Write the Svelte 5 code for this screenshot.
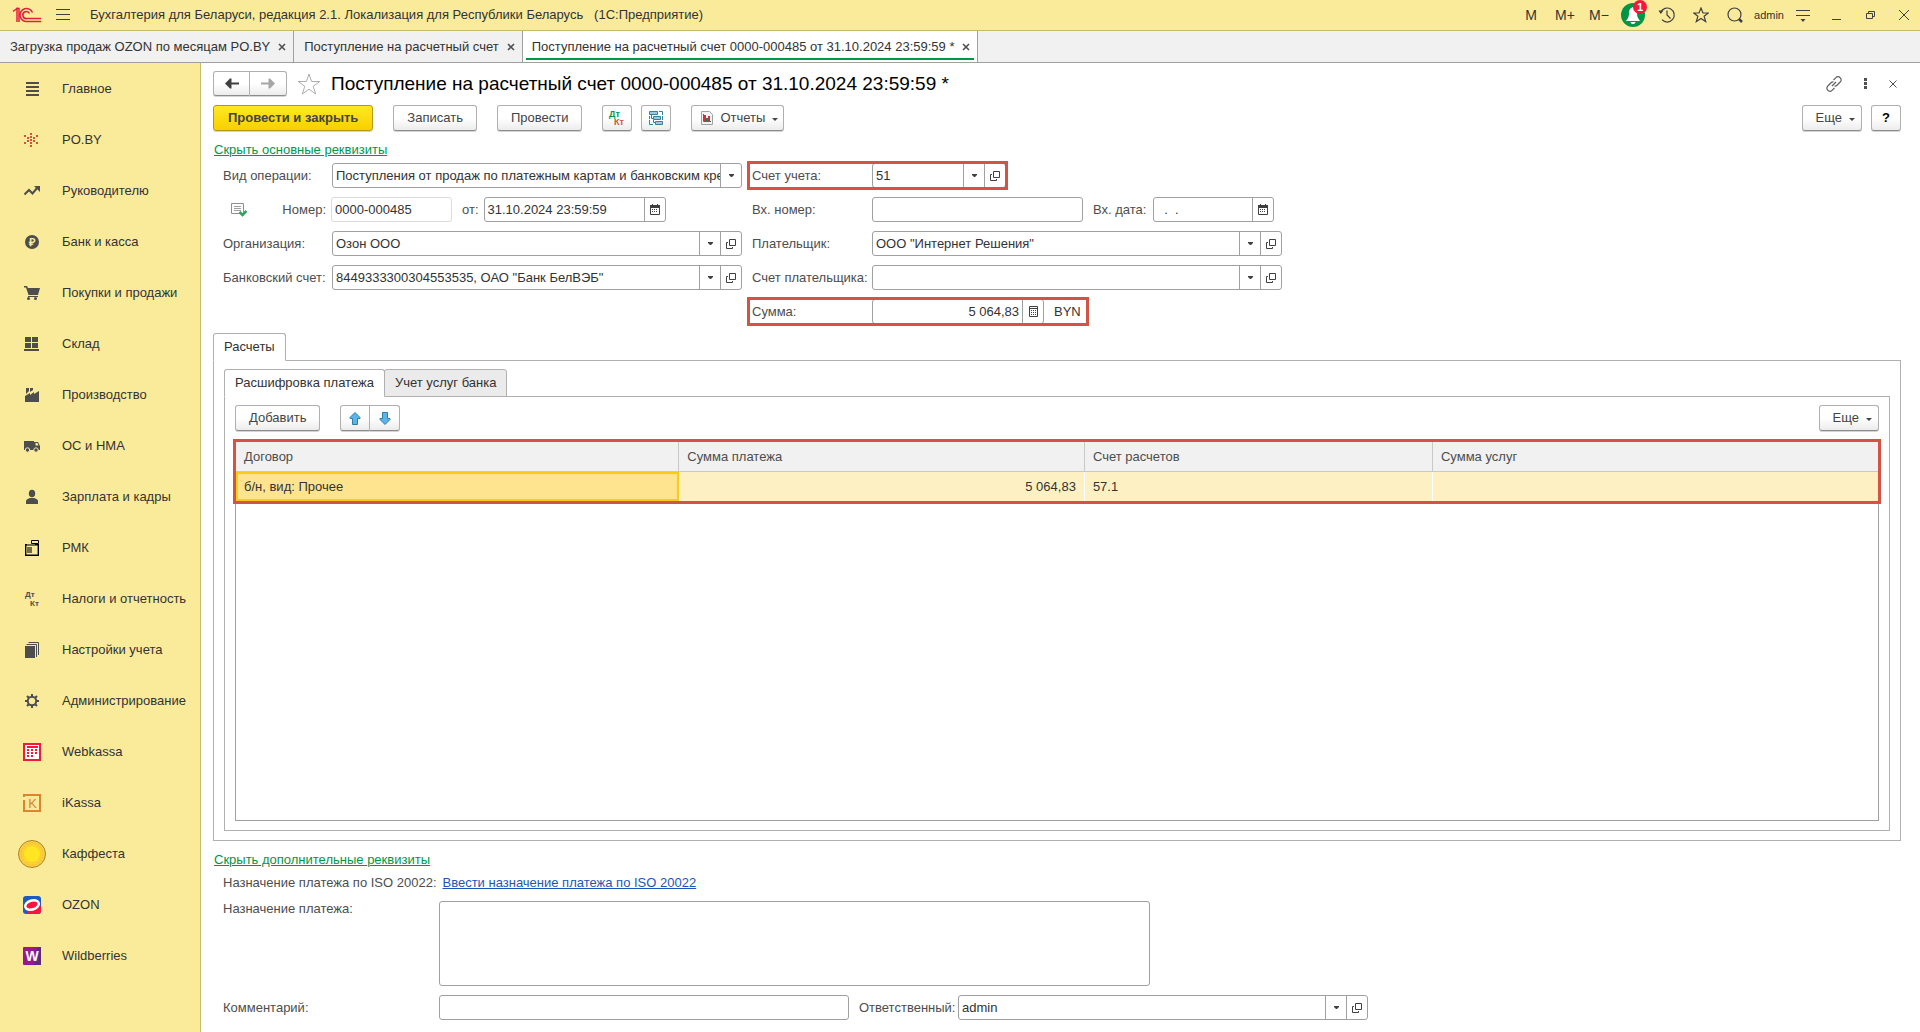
<script lang="ts">
  type NavItem = { icon: string; title: string };

  const nav: NavItem[] = [
    { icon: "main", title: "Главное" },
    { icon: "poby", title: "PO.BY" },
    { icon: "chart", title: "Руководителю" },
    { icon: "bank", title: "Банк и касса" },
    { icon: "cart", title: "Покупки и продажи" },
    { icon: "store", title: "Склад" },
    { icon: "factory", title: "Производство" },
    { icon: "truck", title: "ОС и НМА" },
    { icon: "person", title: "Зарплата и кадры" },
    { icon: "rmk", title: "РМК" },
    { icon: "dtkt", title: "Налоги и отчетность" },
    { icon: "books", title: "Настройки учета" },
    { icon: "gear", title: "Администрирование" },
    { icon: "webkassa", title: "Webkassa" },
    { icon: "ikassa", title: "iKassa" },
    { icon: "kaffesta", title: "Каффеста" },
    { icon: "ozon", title: "OZON" },
    { icon: "wb", title: "Wildberries" },
  ];

  const tabs = [
    "Загрузка продаж OZON по месяцам PO.BY",
    "Поступление на расчетный счет",
    "Поступление на расчетный счет 0000-000485 от 31.10.2024 23:59:59 *",
  ];
  let activeTab = $state(2);
  let innerTab = $state(0);

  // pixel pattern of the PO.BY logo, 2px squares
  const dots = [
    [6, 0], [0, 2], [12, 2], [6, 3], [3, 4], [9, 4], [6, 6],
    [3, 7], [9, 7], [6, 9], [0, 9], [12, 9], [6, 12],
  ];

  let number = $state("0000-000485");
  let date = $state("31.10.2024 23:59:59");
  let org = $state("Озон ООО");
  let bankAccount = $state('8449333300304553535, ОАО "Банк БелВЭБ"');
  let account = $state("51");
  let inNumber = $state("");
  let inDate = $state("  .  .");
  let payer = $state('ООО "Интернет Решения"');
  let payerAccount = $state("");
  let sum = $state("5 064,83");
  let purpose = $state("");
  let comment = $state("");
  let responsible = $state("admin");

  const rows = [{ contract: "б/н, вид: Прочее", sum: "5 064,83", account: "57.1", services: "" }];
</script>

{#snippet drop(label: string)}
  <button class="part" aria-label={label}>
    <svg width="7" height="4" viewBox="0 0 7 4"><path d="M1 0h5v1L4 3H3L1 1z" fill="#404040" /></svg>
  </button>
{/snippet}

{#snippet open()}
  <button class="part" aria-label="Открыть">
    <svg width="10" height="10" viewBox="0 0 10 10" fill="none" stroke="#404040">
      <path d="M3.5 0.5h6v6h-6zM2 3.5H0.5v6h6V8" />
    </svg>
  </button>
{/snippet}

{#snippet calendar()}
  <button class="part" aria-label="Выбрать дату">
    <svg width="10" height="11" viewBox="0 0 10 11">
      <path d="M0 1h10v3H0z" fill="#404040" />
      <path d="M0.5 3.5h9v7h-9zM2.5 0v2M7.5 0v2" fill="none" stroke="#404040" />
      <path d="M2 5h1v1H2zM4 5h1v1H4zM6 5h1v1H6zM2 7h1v1H2zM4 7h1v1H4zM6 7h1v1H6z" fill="#404040" />
    </svg>
  </button>
{/snippet}

<div class="app">
  <header class="titlebar">
    <svg class="logo" width="30" height="18" viewBox="0 0 30 18" fill="none" stroke="#e3203a">
      <path d="M1 5.500l4-3V16M4 2.500h3V16" stroke-width="1.500" />
      <path d="M20.500 6.500A6.500 6.500 0 1 0 15 15.500H29" stroke-width="1.600" />
      <path d="M17.500 7.500A3.500 3.500 0 1 0 15 12.500H29" stroke-width="1.600" />
    </svg>
    <button class="plain burger" aria-label="Меню">
      <svg width="14" height="12" viewBox="0 0 14 12" stroke="#404040"><path d="M0 0.5h14M0 5.5h14M0 10.5h14" /></svg>
    </button>
    <span class="app-name">Бухгалтерия для Беларуси, редакция 2.1. Локализация для Республики Беларусь&nbsp;&nbsp; (1С:Предприятие)</span>
    <div class="title-tools">
      <button class="plain mem">M</button>
      <button class="plain mem">M+</button>
      <button class="plain mem">M−</button>
      <button class="plain" aria-label="Уведомления">
        <span class="bell">
          <svg width="24" height="24" viewBox="0 0 24 24">
            <circle cx="12" cy="12" r="12" fill="#009646" />
            <path d="M12 4c-3 1-4 3-4 6 0 4-1 5-3 8h14c-2-3-3-4-3-8 0-3-1-5-4-6z" fill="#fff" />
            <path d="M9.500 19h5a2.500 2 0 0 1-5 0z" fill="#fff" />
          </svg>
          <span class="badge">1</span>
        </span>
      </button>
      <button class="plain" aria-label="История">
        <svg width="18" height="18" viewBox="0 0 18 18" fill="none" stroke="#404040" stroke-width="1.200">
          <path d="M2.700 6.500A7 7 0 1 1 4 13.700M9 4.500V9l3.500 3.500" />
          <path d="M0.500 4.500h5L2.700 8z" fill="#404040" stroke="none" />
        </svg>
      </button>
      <button class="plain" aria-label="Избранное">
        <svg width="16" height="16" viewBox="0 0 16 16" fill="none" stroke="#404040" stroke-width="1.200">
          <path d="M8 1l2 5h5.300l-4.200 3.300 1.600 5.200L8 11.400l-4.700 3.100 1.600-5.200L0.700 6H6z" />
        </svg>
      </button>
      <button class="plain" aria-label="Поиск">
        <svg width="16" height="16" viewBox="0 0 16 16" fill="none" stroke="#404040" stroke-width="1.200">
          <circle cx="7.500" cy="7.500" r="6.500" /><path d="M12 12l3 3" stroke-width="2.500" />
        </svg>
      </button>
      <span class="user">admin</span>
      <button class="plain" aria-label="Настройка">
        <svg width="14" height="13" viewBox="0 0 14 13">
          <path d="M0 1.500h14M0 6.500h14" stroke="#404040" /><path d="M4.500 10h5L7 13z" fill="#404040" />
        </svg>
      </button>
      <button class="plain" aria-label="Свернуть">
        <svg width="10" height="10" viewBox="0 0 10 10" stroke="#404040"><path d="M0 9.500h9" /></svg>
      </button>
      <button class="plain" aria-label="Восстановить">
        <svg width="10" height="10" viewBox="0 0 10 10" fill="none" stroke="#404040">
          <path d="M0.500 3.500h6v5h-6zM2.500 3.500v-2h6v5h-2" />
        </svg>
      </button>
      <button class="plain" aria-label="Закрыть">
        <svg width="10" height="10" viewBox="0 0 10 10" stroke="#404040"><path d="M0 0l10 10M10 0L0 10" /></svg>
      </button>
    </div>
  </header>

  <nav class="tabs">
    {#each tabs as tab, i}
      <div class="tab" class:active={activeTab === i}>
        <button class="plain" onclick={() => (activeTab = i)}>{tab}</button>
        <button class="plain close" aria-label="Закрыть вкладку">
          <svg width="8" height="8" viewBox="0 0 8 8" stroke="#505050" stroke-width="1.600"><path d="M1 1l6 6M7 1L1 7" /></svg>
        </button>
      </div>
    {/each}
  </nav>

  <div class="body">
    <aside class="sidebar">
      {#each nav as item}
        <a href="#{item.icon}">
          <span class="icon">
            {#if item.icon === "kaffesta"}
              <svg width="28" height="28" viewBox="0 0 28 28">
                <circle cx="14" cy="14" r="13.500" fill="#fcd535" stroke="#a8832a" />
                <circle cx="14" cy="14" r="11" fill="none" stroke="#f5c04a" stroke-width="2" stroke-dasharray="2 1" />
                <circle cx="14" cy="14" r="8.500" fill="#ffe524" stroke="#f8cf20" />
              </svg>
            {:else}
              <svg width="18" height="18" viewBox="0 0 18 18" fill="#4d4d4d">
                {#if item.icon === "main"}
                  <path d="M3 2h13v2H3zM3 6h13v2H3zM3 10h13v2H3zM3 14h13v2H3z" />
                {:else if item.icon === "poby"}
                  {#each dots as [x, y]}
                    <rect x={x + 1} y={y + 2} width="2" height="2" fill="#d9503c" />
                  {/each}
                {:else if item.icon === "chart"}
                  <path d="M1.500 12.500l4.500-4.500 3.500 3.500 5-6" fill="none" stroke="#4d4d4d" stroke-width="2" />
                  <path d="M11 4h6v6z" />
                {:else if item.icon === "bank"}
                  <circle cx="9" cy="9" r="7" />
                  <text x="9" y="13" font-size="11" font-weight="700" fill="#faeb9b" text-anchor="middle">₽</text>
                {:else if item.icon === "cart"}
                  <path d="M1 2h3l1 2h12l-2 7H5.500L3 3.500H1zM5 12h10v1H5z" /><circle cx="5.500" cy="14.500" r="1.500" /><circle cx="12.500" cy="14.500" r="1.500" />
                {:else if item.icon === "store"}
                  <path d="M2 2h6v5H2zM9 2h6v5H9zM2 8h6v5H2zM9 8h6v5H9zM1 14h15v2H1z" />
                {:else if item.icon === "factory"}
                  <path d="M2 16v-6l5-3v2l4-3v2l5-3v11zM3 2h3v3L3 8zM7 2h3v2L7 6z" />
                {:else if item.icon === "truck"}
                  <path d="M1 4h10v1h4l2 4v4H1z" /><circle cx="4.500" cy="13" r="2.200" stroke="#faeb9b" /><circle cx="13" cy="13" r="2.200" stroke="#faeb9b" />
                  <path d="M12.500 6h2l1 2.500h-3z" fill="#faeb9b" />
                {:else if item.icon === "person"}
                  <ellipse cx="9" cy="5.500" rx="3.200" ry="3.800" /><path d="M3 16v-3c0-1.500 2-2.500 4-3h4c2 .5 4 1.500 4 3v3z" />
                {:else if item.icon === "rmk"}
                  <path d="M2.700 5.700h12.600v10.600H2.700z" fill="#faeb9b" stroke="#000" stroke-width="1.400" />
                  <path d="M8.500 1.500h7v3h-7zM11.500 4v3" fill="#faeb9b" stroke="#000" />
                  <path d="M4 5h8v2H4zM4 8h5v6H4z" fill="#6e7048" />
                {:else if item.icon === "dtkt"}
                  <text x="2" y="7" font-size="8" font-weight="700">Дт</text>
                  <text x="7" y="16" font-size="8" font-weight="700">Кт</text>
                {:else if item.icon === "books"}
                  <path d="M2 5h10v12H2z" /><path d="M3.500 3.500h10V16M5.500 1.500h10V14" fill="none" stroke="#4d4d4d" />
                {:else if item.icon === "gear"}
                  <circle cx="9" cy="9" r="4.200" fill="none" stroke="#4d4d4d" stroke-width="2" />
                  <path d="M9 2v3M9 13v3M2 9h3M13 9h3M4 4l2 2M12 12l2 2M14 4l-2 2M6 12l-2 2" stroke="#4d4d4d" stroke-width="2" />
                {:else if item.icon === "webkassa"}
                  <rect x="1" y="1" width="16" height="16" fill="#fff" stroke="#f5183c" stroke-width="2" />
                  <path d="M4 3h11v2H4zM4 6h2v2H4zM8 6h2v2H8zM12 6h2v2h-2zM4 9h2v2H4zM8 9h2v2H8zM12 9h2v2h-2zM4 12h2v2H4zM8 12h2v2H8z" fill="#f5183c" />
                {:else if item.icon === "ikassa"}
                  <path d="M1 3V1h16v16H1V6" fill="none" stroke="#dc8430" stroke-width="2" />
                  <text x="9.500" y="14" font-size="13" fill="#dc8430" text-anchor="middle">K</text>
                {:else if item.icon === "ozon"}
                  <rect width="18" height="18" rx="3" fill="#1d5bc4" /><path d="M4 18l1-4 13-4v5a3 3 0 0 1-3 3z" fill="#f8143c" />
                  <ellipse cx="9" cy="9" rx="7" ry="4.500" transform="rotate(-18 9 9)" fill="#f8143c" stroke="#fff" stroke-width="2.500" />
                {:else if item.icon === "wb"}
                  <rect width="18" height="18" rx="1" fill="#9a1690" /><path d="M14 0h4v18h-7z" fill="#5c2a80" />
                  <text x="9" y="14" font-size="14" font-weight="700" fill="#fff" text-anchor="middle">W</text>
                {/if}
              </svg>
            {/if}
          </span>
          {item.title}
        </a>
      {/each}
    </aside>

    <main>
      <div class="heading">
        <div class="group">
          <button class="btn nav-btn" aria-label="Назад">
            <svg width="14" height="11" viewBox="0 0 14 11"><path d="M0 5.500L5 0.500h1.500V4.500H14v2H6.500v4H5z" fill="#404040" /></svg>
          </button>
          <button class="btn nav-btn" aria-label="Вперед">
            <svg width="14" height="11" viewBox="0 0 14 11"><path d="M14 5.500L9 0.500H7.500V4.500H0v2h7.500v4H9z" fill="#a6a6a6" /></svg>
          </button>
        </div>
        <button class="plain" aria-label="В избранное">
          <svg width="24" height="22" viewBox="0 0 24 22" fill="none" stroke="#adadad">
            <path d="M12 1l2.600 7.500h8.200l-6.600 4.800 2.500 7.700-6.700-4.800L5.300 21l2.500-7.700L1.200 8.500h8.200z" />
          </svg>
        </button>
        <h1>Поступление на расчетный счет 0000-000485 от 31.10.2024 23:59:59 *</h1>
        <div class="window-tools">
          <button class="plain" aria-label="Ссылка">
            <svg width="16" height="16" viewBox="0 0 16 16" fill="none" stroke="#606060" stroke-width="1.200">
              <path d="M7.500 4l2.200-2.200a2.800 2.800 0 0 1 4.500 0 2.800 2.800 0 0 1 0 4.200L11 9.200a3 3 0 0 1-2.500.8" />
              <path d="M8.500 12l-2.200 2.200a2.800 2.800 0 0 1-4.500 0 2.800 2.800 0 0 1 0-4.200L5 6.800A3 3 0 0 1 7.500 6M6 10l4-4" />
            </svg>
          </button>
          <button class="plain" aria-label="Меню формы">
            <svg width="3" height="11" viewBox="0 0 3 11" fill="#505050"><path d="M0 0h3v3H0zM0 4h3v3H0zM0 8h3v3H0z" /></svg>
          </button>
          <button class="plain" aria-label="Закрыть форму">
            <svg width="8" height="8" viewBox="0 0 8 8" stroke="#505050"><path d="M0.500 0.500l7 7M7.500 0.500l-7 7" /></svg>
          </button>
        </div>
      </div>

      <div class="commands">
        <button class="btn primary">Провести и закрыть</button>
        <button class="btn">Записать</button>
        <button class="btn">Провести</button>
        <div class="pair">
          <button class="btn square" aria-label="Дт Кт">
            <svg width="18" height="18" viewBox="0 0 18 18" font-size="9" font-weight="700">
              <text x="1" y="8" fill="#009646">Дт</text><text x="6" y="16" fill="#d9503c">Кт</text>
            </svg>
          </button>
          <button class="btn square" aria-label="Структура подчиненности">
            <svg width="16" height="16" viewBox="0 0 16 16" fill="#a3c8da" stroke="#3a7f9e">
              <path d="M1.500 1.500h8v3h-8zM5.500 6.500h7v3h-7zM7.500 11.500h7v3h-7z" />
              <path d="M11 1.500h3.500V5M14.500 6v4M1.500 6v3M1.500 10v4.500H5M3.500 5v3.500H5M5.500 10v2.500H7" fill="none" />
            </svg>
          </button>
        </div>
        <button class="btn reports">
          <svg width="12" height="14" viewBox="0 0 12 14">
            <path d="M0.500 0.500h8l3 3v10h-11z" fill="#f4f4f4" stroke="#a0a0a0" />
            <path d="M3 4h2v6H3z" fill="#d92c3c" /><path d="M5 7h2v3H5z" fill="#009646" /><path d="M7 5h2v5H7z" fill="#d92c3c" />
            <path d="M2.500 3v7.500H10" fill="none" stroke="#606060" />
          </svg>
          Отчеты
          <i class="caret"></i>
        </button>
        <div class="right">
          <button class="btn more">Еще <i class="caret"></i></button>
          <button class="btn square help">?</button>
        </div>
      </div>

      <a class="toggle" href="#main-details">Скрыть основные реквизиты</a>

      <div class="form">
        <div class="left-col">
          <label for="op">Вид операции:</label>
          <div class="field">
            <select id="op">
              <option>Поступления от продаж по платежным картам и банковским кредитам</option>
            </select>
            {@render drop("Выбрать операцию")}
          </div>

          <div class="num-label">
            <svg width="16" height="14" viewBox="0 0 16 14" fill="none">
              <path d="M0.500 0.500h12v10h-12z" stroke="#909090" /><path d="M3 3.500h7M3 5.500h7M3 7.500h7" stroke="#a0a0a0" />
              <path d="M8.500 9l3 3 4-4" stroke="#2fa35c" stroke-width="2.500" />
            </svg>
            <label for="num">Номер:</label>
          </div>
          <div class="line">
            <div class="field faded"><input id="num" bind:value={number} /></div>
            <label for="date">от:</label>
            <div class="field date"><input id="date" bind:value={date} />{@render calendar()}</div>
          </div>

          <label for="org">Организация:</label>
          <div class="field"><input id="org" bind:value={org} />{@render drop("Выбрать")}{@render open()}</div>

          <label for="bank">Банковский счет:</label>
          <div class="field"><input id="bank" bind:value={bankAccount} />{@render drop("Выбрать")}{@render open()}</div>
        </div>

        <div class="right-col">
          <div class="row marked account">
            <label for="acc">Счет учета:</label>
            <div class="field"><input id="acc" bind:value={account} />{@render drop("Выбрать")}{@render open()}</div>
          </div>
          <div class="row">
            <label for="innum">Вх. номер:</label>
            <div class="field in-number"><input id="innum" bind:value={inNumber} /></div>
            <label class="short" for="indate">Вх. дата:</label>
            <div class="field in-date"><input id="indate" bind:value={inDate} />{@render calendar()}</div>
          </div>
          <div class="row">
            <label for="payer">Плательщик:</label>
            <div class="field wide"><input id="payer" bind:value={payer} />{@render drop("Выбрать")}{@render open()}</div>
          </div>
          <div class="row">
            <label for="payeracc">Счет плательщика:</label>
            <div class="field wide"><input id="payeracc" bind:value={payerAccount} />{@render drop("Выбрать")}{@render open()}</div>
          </div>
          <div class="row marked sum">
            <label for="sum">Сумма:</label>
            <div class="field">
              <input id="sum" class="num" bind:value={sum} />
              <button class="part" aria-label="Калькулятор">
                <svg width="9" height="11" viewBox="0 0 9 11" fill="none" stroke="#404040">
                  <path d="M0.500 0.500h8v10h-8zM0 2.500h9" /><path d="M2 4.500h5M2 6.500h5M2 8.500h5" stroke-dasharray="1 1" />
                </svg>
              </button>
            </div>
            <span class="currency">BYN</span>
          </div>
        </div>
      </div>

      <div class="page-tabs"><button class="page-tab current">Расчеты</button></div>
      <section class="panel outer">
        <div class="page-tabs">
          <button class="page-tab" class:current={innerTab === 0} onclick={() => (innerTab = 0)}>Расшифровка платежа</button>
          <button class="page-tab" class:current={innerTab === 1} onclick={() => (innerTab = 1)}>Учет услуг банка</button>
        </div>
        <div class="panel inner">
          <div class="table-tools">
            <button class="btn add">Добавить</button>
            <div class="group">
              <button class="btn square" aria-label="Вверх">
                <svg width="12" height="13" viewBox="0 0 12 13"><path d="M6 0.500l5 5v1H8.500v6h-5v-6H1v-1z" fill="#5cb4ea" stroke="#2c7fa8" /></svg>
              </button>
              <button class="btn square" aria-label="Вниз">
                <svg width="12" height="13" viewBox="0 0 12 13"><path d="M6 12.500l5-5v-1H8.500v-6h-5v6H1v1z" fill="#5cb4ea" stroke="#2c7fa8" /></svg>
              </button>
            </div>
            <div class="right"><button class="btn more">Еще <i class="caret"></i></button></div>
          </div>
          <div class="grid">
            <table>
              <thead>
                <tr><th class="c1">Договор</th><th class="c2">Сумма платежа</th><th class="c3">Счет расчетов</th><th>Сумма услуг</th></tr>
              </thead>
              <tbody>
                {#each rows as r}
                  <tr><td class="selected">{r.contract}</td><td class="num">{r.sum}</td><td>{r.account}</td><td>{r.services}</td></tr>
                {/each}
              </tbody>
            </table>
          </div>
        </div>
      </section>

      <a class="toggle" href="#extra-details">Скрыть дополнительные реквизиты</a>
      <div class="extra">
        <div class="iso"><span>Назначение платежа по ISO 20022:</span><a href="#iso">Ввести назначение платежа по ISO 20022</a></div>
        <div class="extra-row top">
          <label for="purpose">Назначение платежа:</label>
          <textarea id="purpose" bind:value={purpose}></textarea>
        </div>
        <div class="extra-row">
          <label for="comment">Комментарий:</label>
          <div class="field half"><input id="comment" bind:value={comment} /></div>
          <label class="resp" for="resp">Ответственный:</label>
          <div class="field half"><input id="resp" bind:value={responsible} />{@render drop("Выбрать")}{@render open()}</div>
        </div>
      </div>
    </main>
  </div>
</div>

<style>
  :global(body) {
    background: #fff;
  }
  .app {
    display: flex;
    flex-direction: column;
    min-height: 100vh;
    font: 13px/16px "Liberation Sans", Arial, sans-serif;
    color: #333;
  }
  .app *, .app {
    box-sizing: border-box;
  }
  button, input, select, textarea {
    font: inherit;
    color: inherit;
    margin: 0;
  }
  svg {
    display: block;
    flex: none;
  }
  .plain {
    border: 0;
    padding: 0;
    background: none;
  }
  .num {
    text-align: right;
  }

  /* title bar */
  .titlebar {
    display: flex;
    align-items: center;
    height: 31px;
    padding-left: 12px;
    background: #faeb9b;
    border-bottom: 1px solid #c9b96a;
  }
  .burger {
    margin: 0 20px 0 14px;
  }
  /* every tool sits in a cell of the same width */
  .title-tools {
    display: flex;
    align-items: center;
    margin-left: auto;
  }
  .title-tools > * {
    display: flex;
    justify-content: center;
    width: 34px;
  }
  .title-tools > :last-child {
    width: 32px;
  }
  .mem {
    font-size: 14px;
  }
  .bell {
    position: relative;
  }
  .badge {
    position: absolute;
    top: -3px;
    right: -2px;
    width: 14px;
    height: 14px;
    border-radius: 7px;
    background: #f5183c;
    color: #fff;
    font: bold 11px/14px "Liberation Sans", Arial, sans-serif;
    text-align: center;
  }
  .user {
    font-size: 11px;
  }

  /* open windows */
  .tabs {
    display: flex;
    height: 32px;
    background: #f1f1f1;
    border-bottom: 1px solid #a0a0a0;
  }
  .tab {
    display: flex;
    align-items: center;
    gap: 8px;
    padding: 0 7px 0 10px;
    border-right: 1px solid #a0a0a0;
  }
  .tab.active {
    position: relative;
    padding-left: 9px;
    background: #fff;
  }
  .tab.active::after {
    content: "";
    position: absolute;
    left: 3px;
    right: 3px;
    bottom: 2px;
    height: 2px;
    background: #009646;
  }

  .body {
    display: flex;
    flex: 1;
  }
  .sidebar {
    width: 201px;
    flex: none;
    background: #faeb9b;
    border-right: 1px solid #c9b96a;
  }
  .sidebar a {
    display: flex;
    align-items: center;
    height: 51px;
    padding-left: 18px;
    color: #333;
    text-decoration: none;
  }
  .icon {
    display: flex;
    justify-content: center;
    width: 28px;
    margin-right: 16px;
  }

  main {
    flex: 1;
    min-width: 0;
    padding: 8px 19px 0 12px;
  }
  .heading {
    display: flex;
    align-items: center;
    height: 25px;
    gap: 10px;
  }
  h1 {
    margin: 0;
    font-size: 19px;
    line-height: 22px;
    font-weight: 400;
    color: #000;
  }
  .window-tools {
    display: flex;
    align-items: center;
    gap: 22px;
    margin-left: auto;
    padding-right: 4px;
  }

  .btn {
    display: flex;
    align-items: center;
    justify-content: center;
    height: 26px;
    padding: 0 13px;
    border: 1px solid #b0b0b0;
    border-bottom-color: #8c8c8c;
    border-radius: 3px;
    background: linear-gradient(#fff 50%, #ececec);
    box-shadow: 0 1px #d4d4d4;
    color: #444;
  }
  .primary {
    padding: 0 14px;
    border-color: #b5990d;
    background: linear-gradient(#ffe823, #f8d000);
    font-weight: 700;
  }
  .square {
    width: 30px;
    padding: 0;
  }
  .nav-btn {
    width: 37px;
    height: 25px;
    padding: 0;
  }
  .group {
    display: flex;
  }
  .group .btn:first-child {
    border-radius: 3px 0 0 3px;
  }
  .group .btn:last-child {
    border-left: 0;
    border-radius: 0 3px 3px 0;
  }
  .commands {
    display: flex;
    gap: 20px;
    margin: 9px 0 11px;
  }
  .pair, .right {
    display: flex;
    gap: 9px;
  }
  .right {
    margin-left: auto;
  }
  .caret {
    margin: 2px 0 0 7px;
    border: 3px solid transparent;
    border-top-color: #444;
    border-bottom: 0;
  }
  .reports {
    padding: 0 5px 0 9px;
  }
  .reports svg {
    margin-right: 7px;
  }
  .more {
    padding: 0 6px 0 13px;
  }
  .help {
    color: #000;
    font-weight: 700;
  }
  .toggle {
    display: block;
    width: fit-content;
    margin-left: 1px;
    color: #009646;
  }

  /* form fields */
  .field {
    display: flex;
    height: 25px;
    border: 1px solid #a0a0a0;
    border-radius: 3px;
    background: #fff;
  }
  .field input, .field select {
    flex: 1;
    min-width: 0;
    width: 100%;
    padding: 0 3px;
    border: 0;
    background: none;
    outline: none;
    appearance: none;
  }
  .field select {
    padding-right: 0;
  }
  .part {
    display: flex;
    align-items: center;
    justify-content: center;
    width: 21px;
    flex: none;
    padding: 0;
    border: 0;
    border-left: 1px solid #a0a0a0;
    background: none;
  }
  .faded {
    border-color: #dcdcdc;
  }
  label, .iso span {
    color: #4d4d4d;
  }
  .form {
    display: flex;
    gap: 10px;
    margin: 5px 0 9px 10px;
  }
  .left-col {
    display: grid;
    grid-template-columns: 109px 410px;
    grid-auto-rows: 25px;
    row-gap: 9px;
    align-items: center;
  }
  .num-label {
    display: flex;
    align-items: center;
    justify-content: space-between;
    padding: 0 6px 0 8px;
  }
  .line {
    display: flex;
    align-items: center;
    gap: 10px;
    margin-left: -1px;
  }
  .line .faded {
    width: 121px;
  }
  .line .date {
    width: 182px;
    margin-left: -5px;
  }
  .right-col {
    display: flex;
    flex-direction: column;
    gap: 9px;
  }
  .row {
    display: flex;
    align-items: center;
    height: 25px;
  }
  .row > label {
    width: 120px;
  }
  .row > .short {
    width: 60px;
    margin-left: 10px;
  }
  /* red frame round the values to check */
  .marked {
    align-self: flex-start;
    margin-left: -3px;
    padding-left: 3px;
    outline: 3px solid #d35445;
    outline-offset: -1px;
  }
  .account .field {
    width: 134px;
  }
  .in-number {
    width: 211px;
  }
  .in-date {
    width: 121px;
  }
  .wide {
    width: 410px;
  }
  .sum .field {
    width: 172px;
  }
  .currency {
    padding: 0 6px 0 10px;
  }

  /* form pages */
  .page-tabs {
    display: flex;
  }
  .page-tab {
    height: 28px;
    margin: 0 0 -1px -1px;
    padding: 0 10px;
    border: 1px solid #b0b0b0;
    border-radius: 3px 3px 0 0;
    background: #ebebeb;
  }
  .page-tab:first-child {
    margin-left: 0;
  }
  .page-tab.current {
    border-bottom-color: #fff;
    background: #fff;
    position: relative;
  }
  .panel {
    border: 1px solid #b0b0b0;
  }
  .outer {
    margin-bottom: 11px;
    padding: 8px 10px 9px;
  }
  .inner {
    padding: 8px 10px 9px;
  }
  .table-tools {
    display: flex;
    gap: 20px;
    margin-bottom: 10px;
  }
  .grid {
    height: 380px;
    border: 1px solid #a0a0a0;
  }
  table {
    width: 100%;
    table-layout: fixed;
    border-collapse: separate;
    border-spacing: 0;
    outline: 3px solid #d35445;
  }
  th, td {
    height: 30px;
    padding: 0 8px;
    text-align: left;
    font-weight: 400;
    border-right: 1px solid #c8c8c8;
  }
  th {
    background: #f1f1f1;
    border-bottom: 1px solid #c8c8c8;
    color: #4d4d4d;
  }
  td {
    height: 29px;
    background: #fdf1c4;
    border-color: #fff;
  }
  th:last-child, td:last-child {
    border-right: 0;
  }
  td.num {
    text-align: right;
  }
  td.selected {
    background: #fee48e;
    border: 2px solid #f8cc16;
    padding: 0 6px;
  }
  .c1 {
    width: 27%;
  }
  .c2 {
    width: 24.7%;
  }
  .c3 {
    width: 21.2%;
  }

  /* bottom block */
  .extra {
    margin-left: 10px;
  }
  .iso {
    display: flex;
    gap: 6px;
    margin: 7px 0 10px;
  }
  .iso a {
    color: #1d56b8;
  }
  .extra-row {
    display: flex;
    align-items: center;
    margin-bottom: 9px;
  }
  .extra-row.top {
    align-items: flex-start;
  }
  .extra-row > label {
    width: 216px;
  }
  .extra-row > .resp {
    width: 99px;
    margin-left: 10px;
  }
  textarea {
    width: 711px;
    height: 85px;
    border: 1px solid #a0a0a0;
    border-radius: 3px;
    resize: none;
  }
  .half {
    width: 410px;
  }
</style>
